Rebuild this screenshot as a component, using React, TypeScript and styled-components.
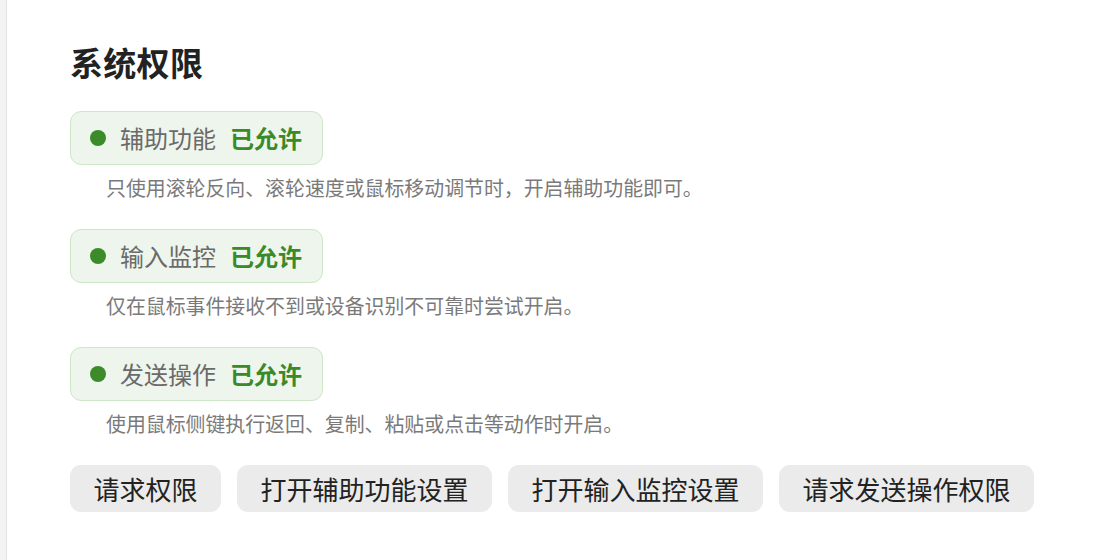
import React from "react";
import styled, { createGlobalStyle } from "styled-components";

const GlobalStyle = createGlobalStyle`
  html, body {
    margin: 0;
    padding: 0;
    background: #f3f3f3;
    font-family: "Noto Sans CJK SC", "Noto Sans", sans-serif;
  }
  #root {
    height: 560px;
  }
`;

const Page = styled.div`
  display: flex;
  height: 560px;
  padding-left: 6px;
  box-sizing: border-box;
  overflow: hidden;
`;

const Panel = styled.section`
  flex: 1;
  background: #ffffff;
  border-left: 1px solid #e3e3e3;
  padding: 43px 0 0 63px;
  box-sizing: border-box;
  display: flex;
  flex-direction: column;
  align-items: flex-start;
`;

const Title = styled.h2`
  margin: 0 0 30px 0;
  font-size: 33px;
  line-height: 38px;
  font-weight: 700;
  color: #222222;
  letter-spacing: 0.3px;
`;

const Item = styled.div`
  display: flex;
  flex-direction: column;
  align-items: flex-start;
  margin-bottom: 27px;
`;

const Pill = styled.div`
  display: flex;
  align-items: center;
  height: 54px;
  box-sizing: border-box;
  padding: 0 20px 0 19px;
  background: #eef5ec;
  border: 1.5px solid #cfe5c8;
  border-radius: 11px;
`;

const Dot = styled.span<{ $on: boolean }>`
  width: 16px;
  height: 16px;
  border-radius: 50%;
  background: ${(p) => (p.$on ? "#3b8b2b" : "#bbbbbb")};
  margin-right: 14px;
  flex-shrink: 0;
`;

const PillLabel = styled.span`
  font-size: 24px;
  line-height: 30px;
  color: #6a6a6a;
`;

const PillStatus = styled.span`
  font-size: 24px;
  line-height: 30px;
  font-weight: 700;
  color: #3a8a2a;
  margin-left: 14px;
`;

const Desc = styled.p`
  margin: 9px 0 0 0;
  padding-left: 36px;
  font-size: 19.9px;
  line-height: 28px;
  color: #7a7a7a;
`;

const ButtonRow = styled.div`
  display: flex;
  gap: 16px;
`;

const Button = styled.button`
  height: 47px;
  padding: 0 23.5px;
  border: none;
  border-radius: 11px;
  background: #ebebeb;
  font-family: "Noto Sans CJK SC", "Noto Sans", sans-serif;
  font-size: 26px;
  font-weight: 400;
  color: #222222;
  cursor: pointer;
`;

const items = [
  {
    label: "辅助功能",
    desc: "只使用滚轮反向、滚轮速度或鼠标移动调节时，开启辅助功能即可。",
  },
  {
    label: "输入监控",
    desc: "仅在鼠标事件接收不到或设备识别不可靠时尝试开启。",
  },
  {
    label: "发送操作",
    desc: "使用鼠标侧键执行返回、复制、粘贴或点击等动作时开启。",
  },
];

const buttons = ["请求权限", "打开辅助功能设置", "打开输入监控设置", "请求发送操作权限"];

export default function App() {
  return (
    <>
      <GlobalStyle />
      <Page>
        <Panel>
          <Title>系统权限</Title>
          {items.map((it) => (
            <Item key={it.label}>
              <Pill>
                <Dot $on />
                <PillLabel>{it.label}</PillLabel>
                <PillStatus>已允许</PillStatus>
              </Pill>
              <Desc>{it.desc}</Desc>
            </Item>
          ))}
          <ButtonRow>
            {buttons.map((b) => (
              <Button key={b}>{b}</Button>
            ))}
          </ButtonRow>
        </Panel>
      </Page>
    </>
  );
}
